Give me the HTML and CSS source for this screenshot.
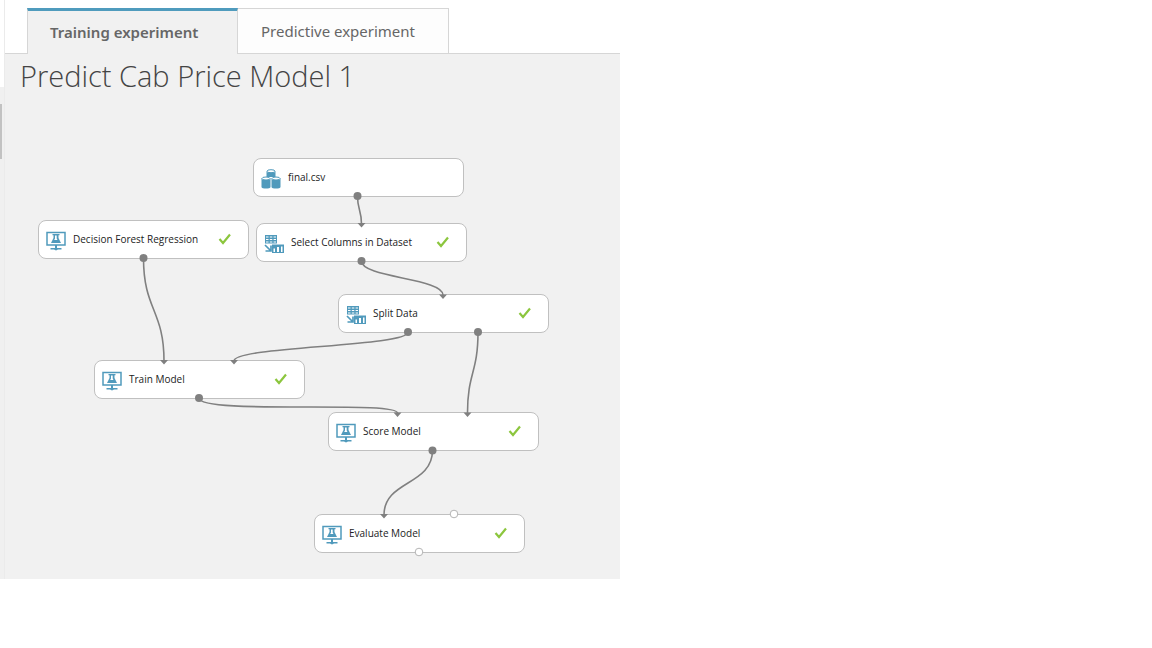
FILE: index.html
```html
<!DOCTYPE html>
<html lang="en">
<head>
<meta charset="utf-8">
<meta name="viewport" content="width=device-width, initial-scale=1">
<title>Predict Cab Price Model 1</title>
<link rel="stylesheet" href="styles.css">
</head>
<body>
<svg class="sprite" aria-hidden="true">
  <symbol id="icon-dataset" viewBox="0 0 20 20">
    <g fill="#509abc">
      <path d="M5.500 2.500V8h9V2.500z"/>
      <path d="M.5 9.500v8.500c0 2 9 2 9 0V9.500z"/><path d="M10.500 9.500v8.500c0 2 9 2 9 0V9.500z"/>
    </g>
    <g fill="#fff" stroke="#509abc">
      <ellipse cx="10" cy="2.200" rx="4" ry="1.500"/><ellipse cx="5" cy="9.500" rx="4" ry="1.500"/><ellipse cx="15" cy="9.500" rx="4" ry="1.500"/>
    </g>
  </symbol>
  <symbol id="icon-transform" viewBox="0 0 20 20">
    <path d="M1 1h12v8.500H1z" fill="#509abc"/>
    <path d="M2 2.500h2.500v1H2zm3.800 0h2.500v1H5.800zm3.800 0h2.400v1H9.600zM2 5h2.500v1H2zm3.800 0h2.500v1H5.800zm3.800 0h2.400v1H9.600zM2 7.500h2.500v1H2zm3.800 0h2.500v1H5.800zm3.800 0h2.400v1H9.600z" fill="#fff"/>
    <path d="M1 11l5.500 5.500M7 11.500v5.500H1.500" fill="none" stroke="#509abc" stroke-width="1.700"/>
    <path d="M8 10.500h12V19H8z" fill="#509abc"/>
    <path d="M9.500 14.500h1.500V18H9.500zm3.500-1.500h2v5h-2zm4-.500h1.500V18H17z" fill="#fff"/>
  </symbol>
  <symbol id="icon-model" viewBox="0 0 20 20">
    <path d="M1 1.500h18v12.500H1z" fill="#fff" stroke="#509abc" stroke-width="1.500"/>
    <path d="M6.500 3h7v1.300h-1V7l2.500 5H5l2.500-5V4.300h-1z" fill="#509abc"/>
    <path d="M9 4.500h1.700v3l.8 1.500H8.200L9 7.500z" fill="#fff"/>
    <path d="M9 14h2v3h4.500v1.500H12L10 19.500 8 18.500H4.500V17H9z" fill="#509abc"/>
  </symbol>
  <symbol id="icon-check" viewBox="0 0 14 12">
    <path d="M1.500 6l3.500 4L12 1.500" fill="none" stroke="#8cc63e" stroke-width="2.200"/>
  </symbol>
</svg>
<div class="workspace">
  <div class="rail"><div class="rail-thumb"></div></div>
  <main class="main">
    <nav class="tabs" aria-label="Experiments">
      <button class="tab tab-active" type="button">Training experiment</button>
      <button class="tab" type="button">Predictive experiment</button>
    </nav>
    <section class="experiment">
      <h1 class="title">Predict Cab Price Model 1</h1>
      <div class="canvas">
        <div class="node node-file"><svg class="node-icon"><use href="#icon-dataset"/></svg><span class="node-name">final.csv</span></div>
        <div class="node node-forest"><svg class="node-icon"><use href="#icon-model"/></svg><span class="node-name">Decision Forest Regression</span><svg class="check"><use href="#icon-check"/></svg></div>
        <div class="node node-select"><svg class="node-icon"><use href="#icon-transform"/></svg><span class="node-name">Select Columns in Dataset</span><svg class="check"><use href="#icon-check"/></svg></div>
        <div class="node node-split"><svg class="node-icon"><use href="#icon-transform"/></svg><span class="node-name">Split Data</span><svg class="check"><use href="#icon-check"/></svg></div>
        <div class="node node-train"><svg class="node-icon"><use href="#icon-model"/></svg><span class="node-name">Train Model</span><svg class="check"><use href="#icon-check"/></svg></div>
        <div class="node node-score"><svg class="node-icon"><use href="#icon-model"/></svg><span class="node-name">Score Model</span><svg class="check"><use href="#icon-check"/></svg></div>
        <div class="node node-evaluate"><svg class="node-icon"><use href="#icon-model"/></svg><span class="node-name">Evaluate Model</span><svg class="check"><use href="#icon-check"/></svg></div>
        <svg class="wires" viewBox="5 100 615 479" width="615" height="479" aria-hidden="true">
          <g fill="none" stroke="#808080" stroke-width="1.600">
            <path d="M357.500 196C357.500 210 361.500 210 361.500 224"/>
            <path d="M143.500 258C143.500 310 164 310 164 361"/>
            <path d="M361.500 261C361.500 278 443 278 443 295"/>
            <path d="M408 332C408 347 234 346 234 361"/>
            <path d="M478 332C478 373 467.500 373 467.500 413"/>
            <path d="M199 398C199 415 397.500 400 397.500 413"/>
            <path d="M432.500 450C432.500 486 384 480 384 515"/>
          </g>
          <g fill="#808080">
            <path d="M357.500 223h8l-4 4.500zM160 360h8l-4 4.500zM439 294.500h8l-4 4.500zM230 360h8l-4 4.500zM463.500 412.500h8l-4 4.500zM393.500 412.500h8l-4 4.500zM380 514h8l-4 4.500z"/>
            <circle cx="357.500" cy="196" r="4"/><circle cx="143.500" cy="258" r="4"/><circle cx="361.500" cy="261" r="4"/>
            <circle cx="408" cy="332" r="4"/><circle cx="478" cy="332" r="4"/><circle cx="199" cy="398" r="4"/><circle cx="432.500" cy="450.500" r="4"/>
          </g>
          <g fill="#fff" stroke="#b4b4b4"><circle cx="454" cy="514" r="3.800"/><circle cx="419" cy="552" r="3.800"/></g>
        </svg>
      </div>
    </section>
  </main>
</div>
</body>
</html>
```
FILE: styles.css
```css
* { box-sizing: border-box; }

body {
  margin: 0;
  background: #fff;
  font-family: "Open Sans", "Noto Sans", sans-serif;
}

.sprite { display: none; }

.workspace {
  display: flex;
  max-width: 620px;
}

.rail {
  flex: 0 0 5px;
  margin-top: 87px;
  padding-top: 17px;
  background: #f0f0f0;
}

.rail-thumb {
  width: 2px;
  height: 55px;
  background: #c2c2c2;
}

.main {
  flex: 1;
  min-width: 0;
  box-shadow: -1px 0 #ebebeb;
}

.tabs {
  display: flex;
  padding: 8px 0 0 22px;
  border-bottom: 1px solid #d6d6d6;
}

.tab {
  flex: 0 1 211px;
  height: 45px;
  padding: 0 0 0 23px;
  border: 1px solid #d6d6d6;
  border-bottom: 0;
  border-left: 0;
  background: #fdfdfd;
  color: #666;
  font-family: "Noto Sans", "Open Sans", sans-serif;
  font-size: 15px;
  line-height: 24px;
  text-align: left;
}

.tab-active {
  height: 46px;
  margin-bottom: -1px;
  padding: 0 0 2px 22px;
  border-top: 3px solid #4f9bbd;
  border-left: 1px solid #d6d6d6;
  background: #f1f1f1;
  font-weight: 600;
}

.experiment { background: #f1f1f1; }

.title {
  margin: 0;
  padding: 0 15px 2px;
  color: #444;
  font-size: 29px;
  font-weight: 300;
  line-height: 44px;
}

.canvas {
  position: relative;
  height: 479px;
}

.wires {
  position: absolute;
  top: 0;
  left: 0;
  pointer-events: none;
}

.node {
  position: absolute;
  display: flex;
  align-items: center;
  width: 211px;
  height: 39px;
  padding: 0 16px 2px 7px;
  border: 1px solid #c0c0c0;
  border-radius: 8px;
  background: #fff;
}

.node-icon {
  flex: none;
  width: 20px;
  height: 20px;
  margin-top: 4px;
}

.node-name {
  flex: 1;
  margin-left: 7px;
  color: #222;
  font-size: 10px;
  line-height: 16px;
  white-space: nowrap;
}

.check {
  flex: none;
  width: 14px;
  height: 12px;
}

.node-file { left: 248px; top: 58px; }
.node-forest { left: 33px; top: 120px; }
.node-select { left: 251px; top: 123px; }
.node-split { left: 333px; top: 194px; }
.node-train { left: 89px; top: 260px; }
.node-score { left: 323px; top: 312px; }
.node-evaluate { left: 309px; top: 414px; }
```
